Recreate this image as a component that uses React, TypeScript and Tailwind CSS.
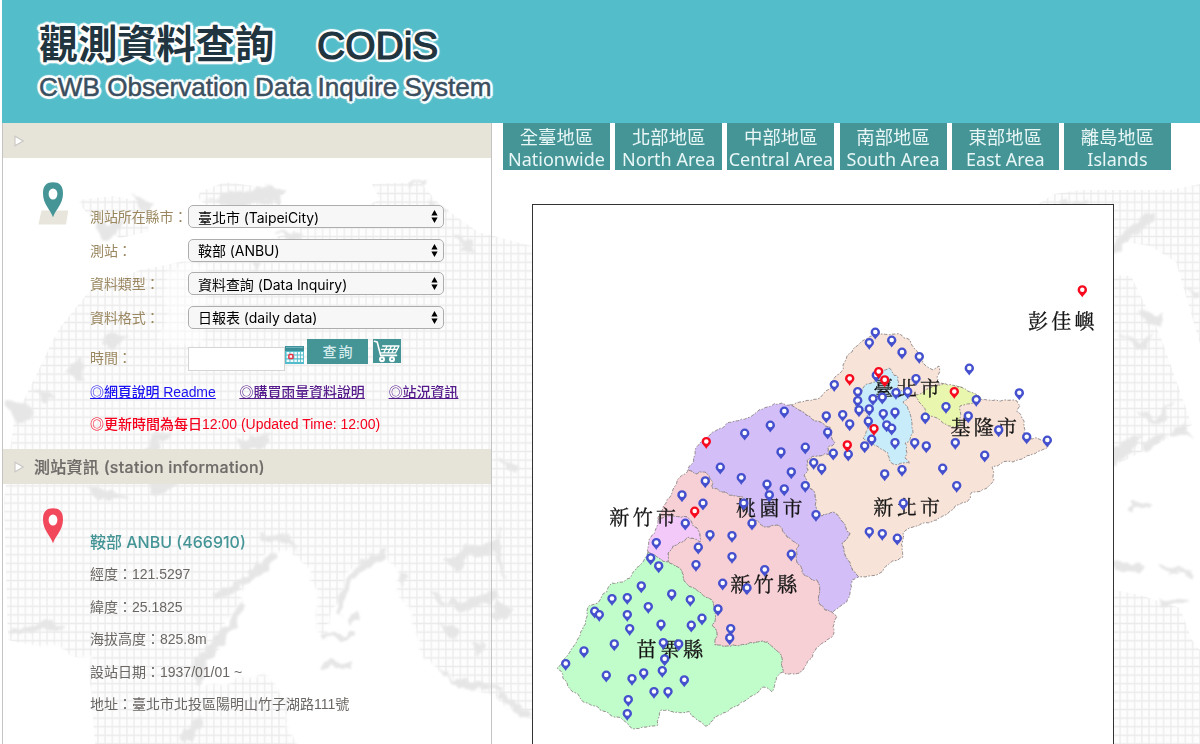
import React from "react";

type Pt = [number, number];

const parse = (s: string): Pt[] =>
  s.trim().split(/\s+/).map((p) => p.split(",").map(Number) as Pt);

const parsePairs = (s: string): Pt[] => parse(s);

const noise = (a: number, b: number, k: number) => {
  const v = Math.sin(a * 12.9898 + b * 78.233 + k * 37.719) * 43758.5453;
  return v - Math.floor(v) - 0.5;
};

// Splits an edge and nudges its middle, so that borders look hand traced.
// The offset depends only on the midpoint: shared borders stay identical.
const rough = (a: Pt, b: Pt): Pt[] => {
  const d = Math.hypot(a[0] - b[0], a[1] - b[1]);
  if (d < 4) return [b];
  const mx = (a[0] + b[0]) / 2;
  const my = (a[1] + b[1]) / 2;
  const amp = Math.min(d * 0.32, 3.4);
  const m: Pt = [mx + noise(mx, my, 1) * amp, my + noise(mx, my, 2) * amp];
  return [...rough(a, m), ...rough(m, b)];
};

const outline = (s: string) => {
  const pts = parse(s);
  const out: Pt[] = [pts[0]];
  pts.forEach((p, i) => out.push(...rough(p, pts[(i + 1) % pts.length])));
  return out.map((p) => p[0].toFixed(1) + "," + p[1].toFixed(1)).join(" ");
};

const REGIONS: { fill: string; pts: string }[] = [
  {
    fill: "#f8e3d8",
    pts: "790,405 800,402 812,400 820,398 831,388 837,375 843,365 850,353 860,343 871,336 883,334 896,334 904,338 910,340 918,353 925,365 933,370 939,366 937,377 937,383 947,386 963,388 977,395 982,400 1017,401 1020,406 1017,412 1022,418 1024,433 1027,439 1037,438 1050,440 1048,447 1033,454 1013,462 1000,464 992,467 994,480 987,488 972,492 967,502 957,505 937,520 913,527 903,533 903,557 890,563 880,573 865,577 859,577 845,555 842,543 850,533 843,522 833,512 822,516 817,513 815,497 807,483 804,475 808,470 807,460 830,455 828,447 835,443 830,427 815,421 803,412",
  },
  {
    fill: "#d3bef8",
    pts: "790,405 782,403 767,407 753,415 740,420 727,423 710,435 700,443 695,455 688,470 697,474 705,472 711,480 712,488 727,493 743,497 747,508 752,518 767,527 777,525 787,537 799,545 797,563 802,570 812,580 817,580 819,603 825,610 832,612 842,605 850,593 852,580 859,577 845,555 842,543 850,533 843,522 833,512 822,516 817,513 815,497 807,483 804,475 808,470 807,460 830,455 828,447 835,443 830,427 815,421 803,412",
  },
  {
    fill: "#f7d0d6",
    pts: "688,470 680,477 672,493 663,508 658,520 667,516 687,517 697,528 700,542 688,537 680,542 668,553 668,562 678,567 685,582 700,592 713,602 717,610 712,625 717,633 715,645 733,645 768,642 782,658 783,672 787,674 800,673 813,653 832,637 833,627 837,616 832,612 825,610 819,603 817,580 812,580 802,570 797,563 799,545 787,537 777,525 767,527 752,518 747,508 743,497 727,493 712,488 711,480 705,472 697,474",
  },
  {
    fill: "#f3c9fa",
    pts: "658,520 651,537 648,552 657,557 668,562 668,553 680,542 688,537 700,542 697,528 687,517 667,516",
  },
  {
    fill: "#c1fdcb",
    pts: "648,552 643,562 630,578 612,583 600,600 590,605 583,627 573,647 557,668 567,683 580,698 600,710 623,720 633,729 658,725 661,710 690,712 705,726 723,713 740,703 757,693 763,687 772,692 775,682 783,672 782,658 768,642 733,645 715,645 717,633 712,625 717,610 713,602 700,592 685,582 678,567 668,562 657,557",
  },
  {
    fill: "#c8ecfa",
    pts: "889,368 898,377 897,387 910,395 903,402 910,413 913,433 905,443 905,458 910,463 893,464 888,453 877,446 863,438 868,428 867,413 855,408 862,392 863,388 875,382 877,373",
  },
  {
    fill: "#e9f7ae",
    pts: "915,395 930,388 943,384 963,388 978,396 973,403 960,406 961,425 953,427 937,418 925,413 922,405",
  },
];

// Station markers are given by the centre of their head.
const BLUE = parsePairs(`
875.3,332.3 869.3,342.7 891.7,340.3 902,352.3 919.3,356.7 969.3,368.3 916,378.7 876.3,375.3 834.3,384.7
1019.3,393 976.3,399.7 946,406.7 968.3,416 998.7,430 925.3,417.3 857.7,391.7 857.7,400.7 859,410 869.3,409
873,398.7 882.3,397.3 896,392.7 907.7,391.7 883.3,413.7 895,412.3 868.3,421.3 886.7,425 891.7,428.3 871.7,439.3
864.7,446 826.3,416 842.7,414.7 849.7,424 827.7,432.3 833.3,453.3 848.3,454.3 805.3,447.3 813.7,462.7 821.7,468.3
895,442.7 914.7,442.7 926.3,446 955.3,442.7 984.7,455.3 902,469.7 884.7,474 942.7,468.3 956.7,485.7 1026.7,437
1047.3,440.3 903.3,503.3 805.3,485.7 816,514.7 869.3,531.7 882.3,533.7 897.3,538.3
784.3,411.3 770.3,425.3 744.7,433.3 781,452 720.3,467.3 791.3,472 741.3,477.7 767,484.3 769.3,495 784.3,489
705.3,481 682,495 703,503.3 743.7,503.3 752,523.3 685.3,523.3 710,534.7 732,535.7 656.3,542.7 698.3,547.3
650.7,558 658.7,566 696,564.7 732,556.7 791.3,554.3 764.7,569.7 722.7,583.3 747,588
641.3,586 612,598.7 627.3,597.7 671.7,594 690.3,599.7 594.7,611.3 599.3,614.7 627.3,614.7 629.7,628.7
648.3,606.7 661,624.3 691.3,625.3 702,618.3 718,609 730.7,628.7 729.7,638 614.3,644 584,651 565.7,663.7
663.3,642.7 678.7,644 664.7,659 662.3,670.7 684.3,680 606.3,675.3 632,678.7 643.7,673 654,691.7 668,691.7
628.3,699.7 627.3,713.7`);

const RED = parsePairs(
  "878.7,371.7 884.7,380 849.7,378.7 954.3,391.7 874,428.7 847.3,445 706.3,441.7 694.7,511.3 1082.3,290",
);

const PLACES: { x: number; y: number; name: string }[] = [
  { x: 1028, y: 321, name: "彭佳嶼" },
  { x: 873.5, y: 388, name: "臺北市" },
  { x: 950.5, y: 427, name: "基隆市" },
  { x: 873.5, y: 507.5, name: "新北市" },
  { x: 736, y: 508, name: "桃園市" },
  { x: 609.5, y: 517, name: "新竹市" },
  { x: 730.5, y: 584, name: "新竹縣" },
  { x: 636.5, y: 649, name: "苗栗縣" },
];

const Marker = ({ at, color }: { at: Pt; color: string }) => (
  <g transform={`translate(${at[0]} ${at[1]})`}>
    <path d="M0 7.2C-1.6 4.2-4.7 2.7-4.7-.1a4.7 4.7 0 0 1 9.4 0C4.7 2.7 1.6 4.2 0 7.2Z" fill={color} />
    <circle cy="-.2" r="2.25" fill="#fff" />
  </g>
);

const StationMap = () => (
  <svg className="block h-full w-full" viewBox="533 205 580 539" preserveAspectRatio="xMinYMin slice">
    {REGIONS.map((r) => (
      <polygon
        key={r.fill}
        points={outline(r.pts)}
        fill={r.fill}
        stroke="#8d8484"
        strokeWidth="0.9"
        strokeDasharray="3.5 1.6 1.6 1.4"
      />
    ))}
    <g
      fill="#141414"
      stroke="#141414"
      strokeWidth="0.3"
      fontSize="20"
      fontFamily="'AR PL UKai TW', 'Noto Serif CJK TC', 'Noto Sans CJK TC', serif"
    >
      {PLACES.map((p) => (
        <text key={p.name} x={p.x} y={p.y + 7.5} letterSpacing="3.3">
          {p.name}
        </text>
      ))}
    </g>
    {BLUE.map((p, i) => (
      <Marker key={i} at={p} color="#4450cd" />
    ))}
    {RED.map((p, i) => (
      <Marker key={i} at={p} color="#f80a1e" />
    ))}
  </svg>
);

const WorldBackdrop = () => (
  <svg className="absolute inset-0 h-full w-full" viewBox="0 0 1200 744">
    <defs>
      <pattern id="mesh" width="7.25" height="8.6" patternUnits="userSpaceOnUse">
        <rect width="7.25" height="8.6" fill="#fdfdfd" />
        <path d="M0 4.3H7.25M3.6 0V8.6" stroke="#ebebeb" strokeWidth="1.2" />
      </pattern>
      <filter id="sea" x="-5%" y="-5%" width="110%" height="110%">
        <feTurbulence type="fractalNoise" baseFrequency="0.045" numOctaves="3" seed="4" result="n" />
        <feDisplacementMap in="SourceGraphic" in2="n" scale="22" xChannelSelector="R" yChannelSelector="G" />
        <feGaussianBlur stdDeviation="1.6" />
      </filter>
      <filter id="shore" x="-5%" y="-5%" width="110%" height="110%">
        <feTurbulence type="fractalNoise" baseFrequency="0.08" numOctaves="2" seed="9" result="n" />
        <feDisplacementMap in="SourceGraphic" in2="n" scale="14" xChannelSelector="R" yChannelSelector="G" />
        <feGaussianBlur stdDeviation="1" />
      </filter>
    </defs>
    <g fill="url(#mesh)">
      <path d="M76 200L115 196 150 204 148 232 120 238 96 224Z" />
      <path d="M200 192L225 182 285 190 280 205 195 205Z" />
      <path d="M372 184L420 182 440 205 478 232 532 246V720L400 744H95L88 660 8 640 4 500 14 420 58 330 90 290 140 270 240 250 380 200Z" />
      <path d="M1038 204L1054 194 1080 190 1170 190 1200 184V344L1176 262 1150 246 1114 240V204Z" />
      <path d="M1114 275L1131 276 1160 335 1192 425 1165 440 1114 466Z" />
      <path d="M1114 590L1140 595 1180 608 1192 640 1200 650V744H1114Z" />
    </g>
    <g fill="#fff" filter="url(#sea)">
      <path d="M268 548L292 550 318 590 324 640 345 590 352 572 386 552 398 584 416 640 440 675 470 690 500 700 530 720V750H292L290 700 262 672 204 690 206 660 240 600Z" />
      <path d="M166 270L210 262 205 345 160 340Z" opacity=".55" />
      <path d="M3 640L90 655 92 750H3Z" />
      <path d="M3 150H80V290L50 340 3 400Z" />
      <path d="M150 150H200V240L150 250ZM440 150H500V222L440 200ZM300 150H370V210L320 225Z" />
    </g>
    <g fill="#e6e6e6" filter="url(#shore)">
      <path d="M210 594L240 582 262 562 270 550 276 556 266 572 240 588 214 600Z" />
      <path d="M240 600L246 604 236 628 206 660 200 684 194 682 198 656 224 630Z" />
      <path d="M258 534L292 536 300 552 290 542 262 541ZM335 614L342 584 360 562 384 548 388 554 362 572 348 588 341 616Z" />
      <path d="M438 670L460 680 500 685 500 691 458 687ZM8 628L60 622 62 628 8 634Z" />
      <path d="M180 738L200 715 204 720 186 742ZM443 560L465 548 498 540 496 550 466 558 456 572Z" />
      <path d="M440 598L460 602 496 588 498 598 460 612ZM345 618L356 612 360 620 350 626Z" />
      <path d="M92 218L116 224 126 218 114 236 104 240ZM130 192L152 202 146 212ZM205 200L240 194 268 186 288 192 280 200 230 206Z" />
      <path d="M252 256L260 262 250 274ZM112 330L128 336 112 350 104 344ZM62 368L82 360 84 380 70 376Z" />
      <path d="M36 390L52 394 46 404ZM6 400L24 402 34 418 16 424ZM152 436L168 430 154 456 144 452Z" />
      <path d="M272 234L304 230 300 242ZM456 235L472 240 474 254 462 252ZM236 440L268 434 262 448 244 450Z" />
      <path d="M86 486L112 490 134 498 96 500ZM148 478L176 480 172 492 152 490ZM322 662H352V668H324Z" />
      <path d="M320 634H356V638H320ZM430 200L446 210 436 216ZM408 182H424V186H408Z" />
      <path d="M1108 248L1124 232 1150 214 1154 220 1130 240 1112 254Z" />
      <path d="M1138 312L1164 314 1160 328 1148 324ZM1120 334L1140 342 1152 332 1150 346 1134 350Z" />
      <path d="M1136 410L1156 416 1174 402 1164 420 1148 422ZM1168 428L1184 424 1194 436 1172 436Z" />
      <path d="M1112 450L1126 438 1140 436 1130 452 1112 468ZM1140 444L1164 434 1160 446 1146 452Z" />
      <path d="M1112 562L1144 564 1140 572 1112 570ZM1158 566L1192 572 1190 576 1158 571ZM1158 600H1190V604H1160Z" />
      <path d="M1130 503H1152V509H1130ZM1186 288L1198 292 1192 298ZM1060 200H1088V205H1060Z" />
      <path d="M497 520L502 550 506 580 496 560ZM497 600L512 610 506 622 496 618ZM500 690L530 714 524 720 498 698ZM497 458L520 466 514 474Z" />
      <path d="M370 555L378 560 372 566ZM400 570L408 576 404 586 400 580ZM428 590L448 600 440 606ZM440 620L458 632 450 640ZM470 640L486 646 478 656Z" />
    </g>
  </svg>
);

const AREAS: [string, string][] = [
  ["全臺地區", "Nationwide"],
  ["北部地區", "North Area"],
  ["中部地區", "Central Area"],
  ["南部地區", "South Area"],
  ["東部地區", "East Area"],
  ["離島地區", "Islands"],
];

const FIELDS: [string, string][] = [
  ["測站所在縣市：", "臺北市 (TaipeiCity)"],
  ["測站：", "鞍部 (ANBU)"],
  ["資料類型：", "資料查詢 (Data Inquiry)"],
  ["資料格式：", "日報表 (daily data)"],
];

const DETAILS = [
  "經度：121.5297",
  "緯度：25.1825",
  "海拔高度：825.8m",
  "設站日期：1937/01/01 ~",
  "地址：臺北市北投區陽明山竹子湖路111號",
];

const SectionBar = ({ children }: { children?: React.ReactNode }) => (
  <div className="flex h-[35px] shrink-0 items-center bg-[#e6e4d9] pl-[11px]">
    <svg className="h-3 w-[10px]" viewBox="0 0 10 12">
      <path d="M1 1.2V10.8L9.2 6Z" fill="#fff" stroke="#c9c6c4" strokeWidth="1.1" />
    </svg>
    <h2 className="ml-[10px] font-['Inter','Noto_Sans_CJK_TC',sans-serif] text-[16px] font-medium tracking-[0.28px] whitespace-nowrap text-[#6f6b68] [-webkit-text-stroke:0.2px_#6f6b68]">
      {children}
    </h2>
  </div>
);

const Select = ({ children }: { children: React.ReactNode }) => (
  <div className="flex h-[23px] w-[256px] items-center justify-between rounded-[5px] border border-[#adadad] bg-[#f7f7f7] pr-[5px] pl-[9px] font-['Inter','Noto_Sans_CJK_TC',sans-serif] text-[14px] tracking-[-0.05px] whitespace-nowrap text-black">
    <span className="pt-px">{children}</span>
    <svg className="h-[13px] w-[7px]" viewBox="0 0 7 13">
      <path d="M3.5 0L6.6 5.4H.4ZM3.5 13L6.6 7.6H.4Z" fill="#000" />
    </svg>
  </div>
);

const CalendarIcon = () => (
  <svg className="mt-[7px] h-[18px] w-[19px]" viewBox="0 0 19 18">
    <rect width="19" height="18" fill="#52bcca" />
    <rect width="19" height="5" fill="#3a8f98" />
    <path d="M1.5 1.4H18" stroke="#a9dbe2" strokeDasharray="1 1" />
    <path d="M1.5 6h3v2.6h-3zM5.4 6h3v2.6h-3zM9.3 6h2.6v2.6H9.3zM12.8 6h2.2v2.6h-2.2zM15.9 6h2.2v2.6h-2.2zM1.5 9.6h2v2.6h-2zM9.3 9.6h2.6v2.6H9.3zM12.8 9.6h2.2v2.6h-2.2zM15.9 9.6h2.2v2.6h-2.2zM1.5 13.4h3V16h-3zM5.4 13.4h3V16h-3zM9.3 13.4h2.6V16H9.3zM12.8 13.4h2.2V16h-2.2zM15.9 13.4h2.2V16h-2.2z" fill="#eefafb" />
    <rect x="3.9" y="8.6" width="4" height="4" rx=".8" fill="#fff" stroke="#ee3045" strokeWidth="1.5" />
  </svg>
);

const CartIcon = () => (
  <svg className="h-6 w-7 bg-[#459597]" viewBox="0 0 28 24">
    <g fill="none" stroke="#fff" strokeLinecap="round" strokeLinejoin="round">
      <path d="M1.5 2.2L4.2 3 7.6 16.4H23.5" strokeWidth="1.6" />
      <path d="M9.6 7H26L22.5 13.8H7.6M8.4 10.4H24.4M14.2 7L10.8 13.8M18.4 7L15 13.8M22.3 7L18.8 13.8" strokeWidth="1.3" />
    </g>
    <circle cx="9" cy="20.2" r="3" fill="#fff" />
    <circle cx="19" cy="20.2" r="3" fill="#fff" />
    <circle cx="9" cy="20.2" r=".9" fill="#459597" />
    <circle cx="19" cy="20.2" r=".9" fill="#459597" />
  </svg>
);

const BigPin = ({ fill, base }: { fill: string; base?: boolean }) => (
  <svg className="h-11 w-8 shrink-0" viewBox="0 0 32 44">
    {base && <path d="M3.5 28.5H30.3L28 42.5H.4Z" fill="#e8e6dc" />}
    <path d="M15 35.3C12.5 27.5 5 22.5 5 11.5 5 3 9 .3 15 .3S25 3 25 11.5C25 22.5 17.5 27.5 15 35.3Z" fill={fill} />
    <ellipse cx="15" cy="12" rx="4.4" ry="5.5" fill="#fff" />
  </svg>
);

export default function App() {
  return (
    <div className="relative h-[744px] w-[1200px] overflow-hidden bg-white font-['Liberation_Sans','Noto_Sans_CJK_TC',sans-serif]">
      <WorldBackdrop />
      <div className="relative flex h-full flex-col pl-[2px]">
        <header className="flex h-[123px] shrink-0 flex-col bg-[#53bdca] pt-[20px] pl-[37px] whitespace-nowrap [text-shadow:3px_0_1px_#fff,-3px_0_1px_#fff,0_3px_1px_#fff,0_-3px_1px_#fff,2.1px_2.1px_1px_#fff,-2.1px_2.1px_1px_#fff,2.1px_-2.1px_1px_#fff,-2.1px_-2.1px_1px_#fff]">
          <h1 className="flex h-[50px] items-center text-[#20353f]">
            <span className="w-[278px] text-[39.2px] font-bold">觀測資料查詢</span>
            <span className="pt-[2px] text-[39px] [-webkit-text-stroke:1.2px_#20353f]">CODiS</span>
          </h1>
          <p className="flex h-[36px] items-center text-[26.1px] text-[#3a4f60] [-webkit-text-stroke:0.5px_#3a4f60]">
            CWB Observation Data Inquire System
          </p>
        </header>

        <div className="flex min-h-0 flex-1">
          <aside className="flex w-[490px] shrink-0 flex-col border-r border-l border-[#c4c4c4]">
            <SectionBar />
            <section className="flex h-[291px] shrink-0 pt-[24px] pl-[35px]">
              <BigPin fill="#459597" base />
              <div className="flex flex-col pt-[23px] pl-[20px]">
                {FIELDS.map(([label, value]) => (
                  <div key={label} className="flex h-[33.6px] items-start">
                    <span className="w-[98px] pt-px text-[14px] leading-[23px] tracking-[-0.1px] whitespace-nowrap text-[#9a875f]">
                      {label}
                    </span>
                    <Select>{value}</Select>
                  </div>
                ))}
                <div className="flex h-[37px] items-start">
                  <span className="mt-[8px] w-[98px] text-[14px] leading-[23px] tracking-[-0.1px] text-[#9a875f]">時間：</span>
                  <div className="mt-[8px] h-6 w-[97px] border border-[#d5d5d5] bg-white" />
                  <CalendarIcon />
                  <button className="ml-[3px] h-[24.5px] w-[61px] bg-[#459597] pl-[2px] text-[14px] leading-[24px] font-medium tracking-[2px] text-[#d7ecec]">
                    查詢
                  </button>
                  <div className="ml-[5px]">
                    <CartIcon />
                  </div>
                </div>
                <div className="mt-[6px] flex h-[21px] items-center gap-[24px] text-[14px] font-medium tracking-[-0.1px] whitespace-nowrap text-[#551a8b] underline">
                  <a className="text-[#1a12f0]">◎網頁說明 Readme</a>
                  <a>◎購買雨量資料說明</a>
                  <a>◎站況資訊</a>
                </div>
                <p className="mt-[11px] h-[21px] text-[14px] leading-[21px] font-medium whitespace-nowrap text-[#f5001d]">
                  ◎更新時間為每日12:00 (Updated Time: 12:00)
                </p>
              </div>
            </section>
            <SectionBar>測站資訊 (station information)</SectionBar>
            <section className="flex pt-[24px] pl-[35px]">
              <BigPin fill="#f1485b" />
              <div className="flex flex-col pt-[22px] pl-[20px] text-[14px] whitespace-nowrap text-[#6a6663]">
                <h3 className="h-[28px] font-['Inter','Noto_Sans_CJK_TC',sans-serif] text-[16px] leading-[24px] font-medium text-[#459597]">
                  鞍部 ANBU (466910)
                </h3>
                {DETAILS.map((d) => (
                  <p key={d} className="h-[32.5px] leading-[32.5px]">
                    {d}
                  </p>
                ))}
              </div>
            </section>
          </aside>

          <main className="flex flex-1 flex-col">
            <nav className="flex gap-[5.2px] pl-[11px]">
              {AREAS.map(([zh, en]) => (
                <a
                  key={en}
                  className="flex h-[47px] w-[107px] flex-col items-center justify-center bg-[#459597] pt-px font-['Noto_Sans','Noto_Sans_CJK_TC',sans-serif] whitespace-nowrap text-[#e8f6f6]"
                >
                  <span className="text-[18.4px] leading-[23px]">{zh}</span>
                  <span className="text-[18px] leading-[22px]">{en}</span>
                </a>
              ))}
            </nav>
            <div className="mt-[34px] ml-[40px] min-h-0 w-[582px] flex-1 border border-b-0 border-[#333] bg-white">
              <StationMap />
            </div>
          </main>
        </div>
      </div>
    </div>
  );
}
